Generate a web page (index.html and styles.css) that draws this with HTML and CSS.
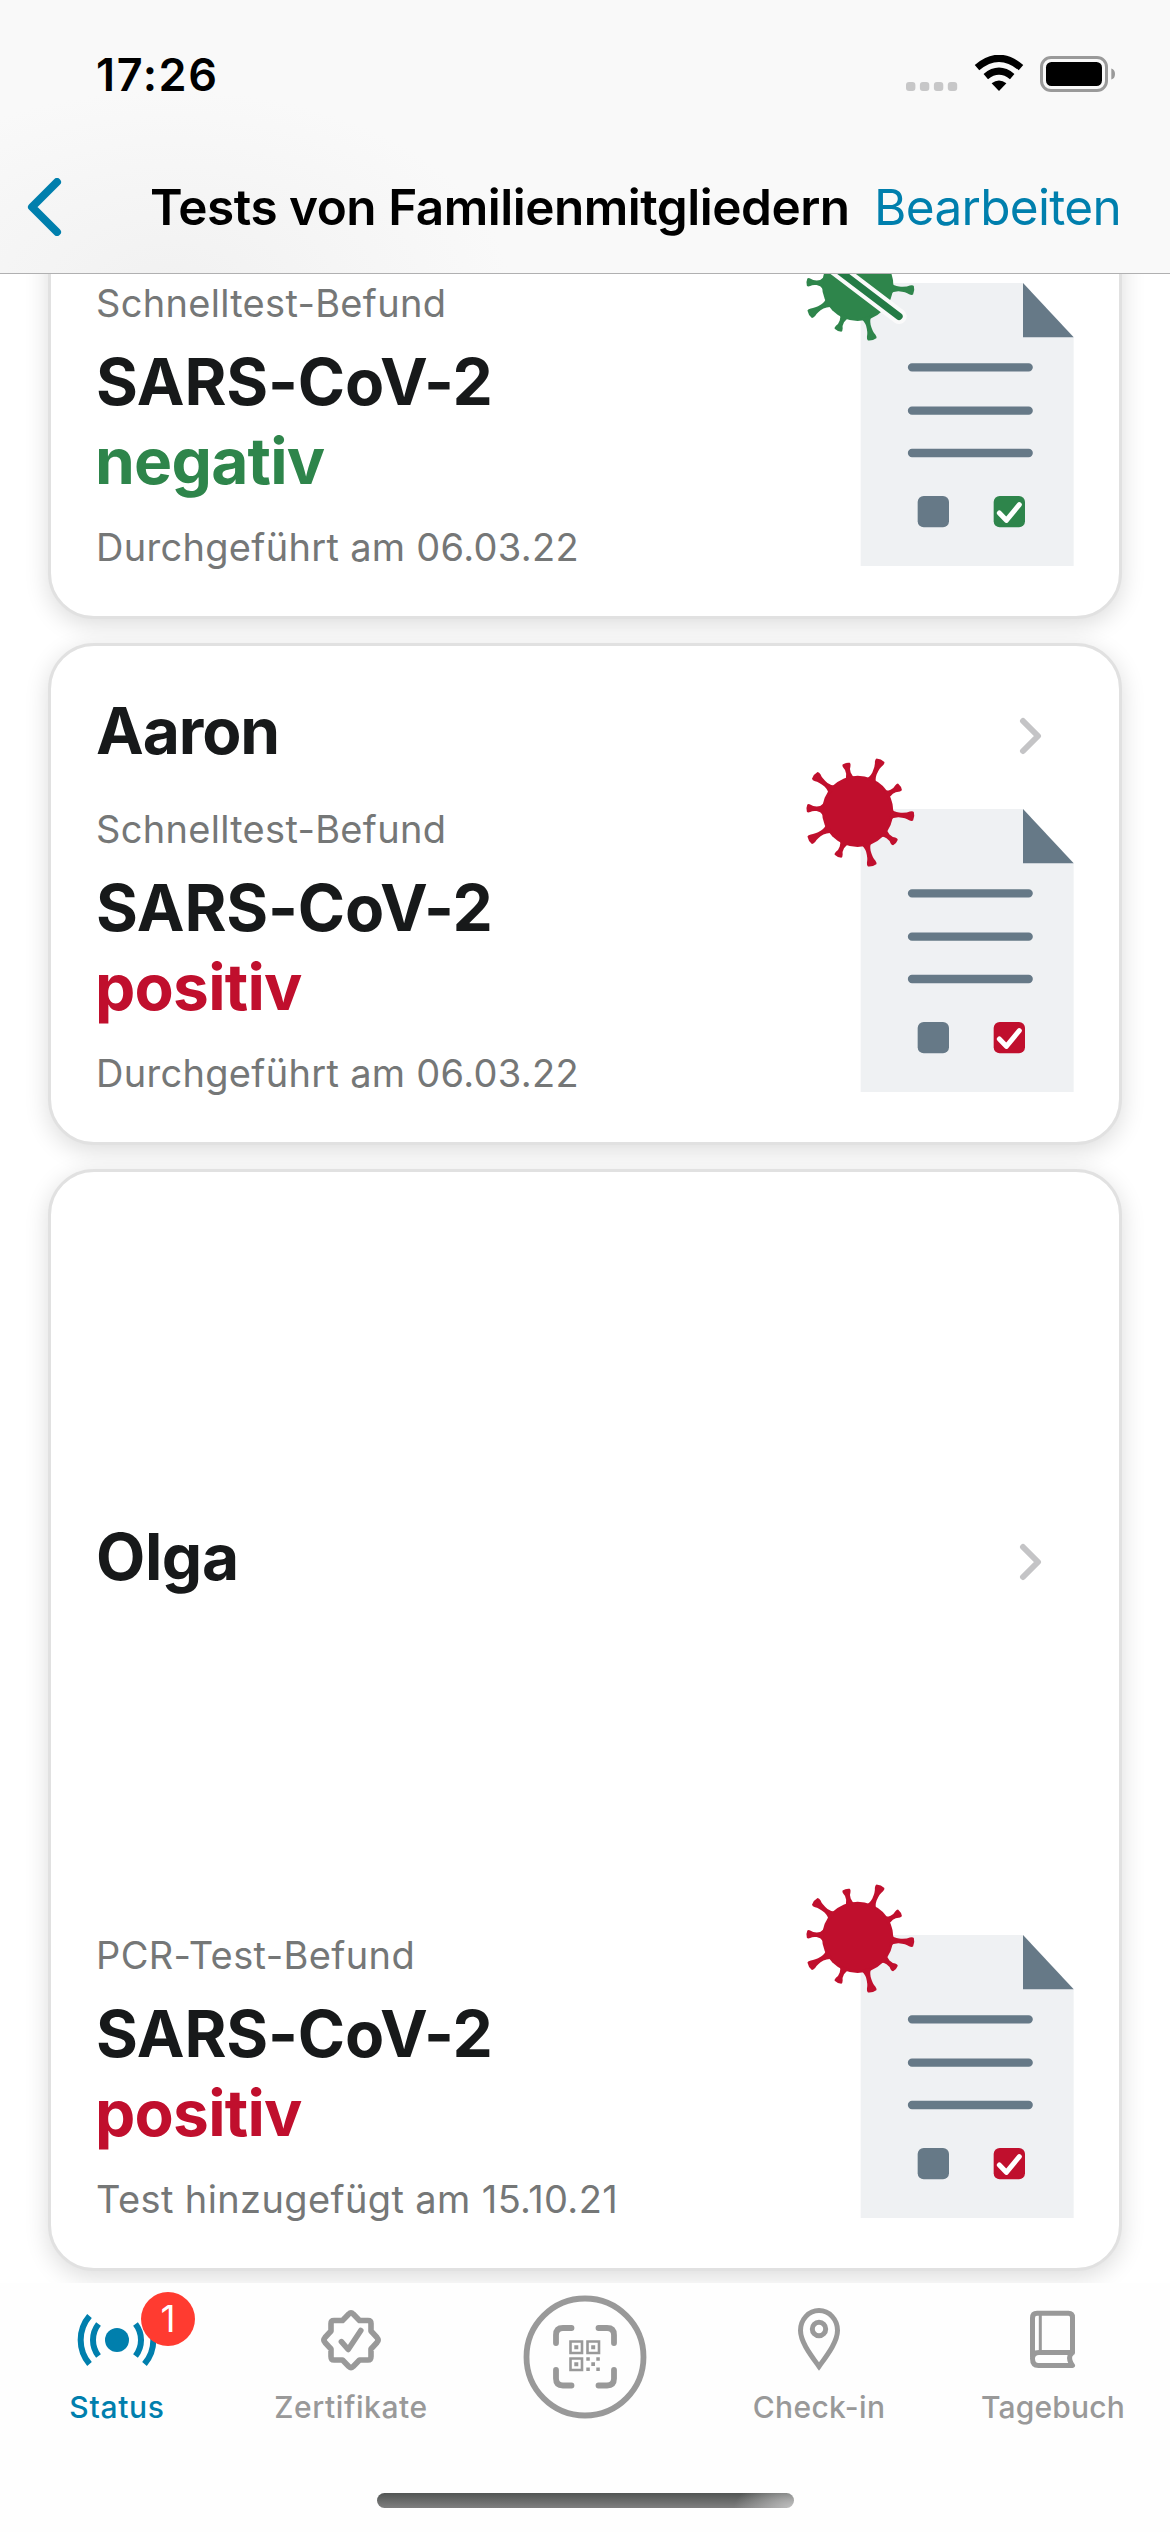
FILE: index.html
```html
<!DOCTYPE html>
<html lang="de">
<head>
<meta charset="utf-8">
<title>Tests von Familienmitgliedern</title>
<link rel="stylesheet" href="styles.css">
</head>
<body>
<svg class="defs" aria-hidden="true">
  <defs>
    <path id="spike-long" d="M98-18Q108-8 124-7Q146-7 156-13Q164-16 168-13Q173 0 168 13Q164 16 156 13Q146 7 124 7Q108 8 98 18Z"/>
    <path id="spike-short" d="M98-18Q106-8 118-7Q130-6 137-11Q144-14 147-11Q151 0 147 11Q144 14 137 11Q130 6 118 7Q106 8 98 18Z"/>
    <g id="virus" transform="translate(263 274)">
      <circle r="107"/>
      <use href="#spike-long" transform="rotate(-66)"/>
      <use href="#spike-short" transform="rotate(-30)"/>
      <use href="#spike-long" transform="rotate(5)"/>
      <use href="#spike-short" transform="rotate(39.5)"/>
      <use href="#spike-long" transform="rotate(75)"/>
      <use href="#spike-short" transform="rotate(113.7)"/>
      <use href="#spike-long" transform="rotate(149)"/>
      <use href="#spike-short" transform="translate(-5 0) rotate(183.7)"/>
      <use href="#spike-long" transform="rotate(220)"/>
      <use href="#spike-short" transform="rotate(256.4)"/>
    </g>
    <g id="paper">
      <path class="sheet" d="M272 267H759L911 429V1116H272Z"/>
      <path class="slate" d="M759 267V430H911Z"/>
      <path class="rule" d="M426 520H776M426 650H776M426 777H776"/>
      <rect class="slate" x="443" y="906" width="94" height="94" rx="18"/>
    </g>
    <g id="checked">
      <rect x="671" y="906" width="94" height="94" rx="18"/>
      <path class="tick" d="M688 957L709 979L748 932"/>
    </g>
    <path id="chevron" d="M4 4L19 19L4 34"/>
  </defs>
</svg>

<header class="header">
  <div class="status-bar">
    <span class="time">17:26</span>
    <div class="indicators">
      <svg class="cellular" width="52" height="9" viewBox="0 0 52 9"><rect width="9.4" height="9" rx="3"/><rect x="13.9" width="9.4" height="9" rx="3"/><rect x="27.9" width="9.4" height="9" rx="3"/><rect x="41.8" width="9.4" height="9" rx="3"/></svg>
      <svg class="wifi" width="50" height="37" viewBox="0 0 50 37"><path d="M25 36L17.6 28.3Q25 22.5 32.4 28.3Z"/><path class="wave" d="M11.8 21.6Q25 10.8 38.2 21.6M3 12.6Q25-6 47 12.6"/></svg>
      <svg class="battery" width="76" height="36" viewBox="0 0 76 36"><rect class="shell" x="1.5" y="1.5" width="65" height="33" rx="9.5"/><rect x="6" y="6" width="56" height="24" rx="5.5"/><path class="nub" d="M71.3 12.5Q75 13.5 75 18T71.3 23.5Z"/></svg>
    </div>
  </div>
  <nav class="nav-bar">
    <svg class="back" width="36" height="58" viewBox="0 0 36 58"><path d="M31 4L6 29L31 54"/></svg>
    <h1 class="title">Tests von Familienmitgliedern</h1>
    <span class="edit">Bearbeiten</span>
  </nav>
</header>

<main class="list">
  <section class="card">
    <div class="card-head"></div>
    <div class="card-body">
      <div class="result">
        <p class="kind">Schnelltest-Befund</p>
        <p class="finding">SARS-CoV-2</p>
        <p class="finding negative">negativ</p>
        <p class="date">Durchgeführt am 06.03.22</p>
      </div>
      <svg class="illustration green" viewBox="99 108 816 1011">
        <use href="#paper"/><use href="#virus"/><use href="#checked"/>
        <path class="slash-gap" d="M138 178L387 367"/><path class="slash" d="M138 178L387 367"/>
      </svg>
    </div>
  </section>
  <section class="card">
    <div class="card-head"><h2 class="name">Aaron</h2><svg class="chevron" width="24" height="38"><use href="#chevron"/></svg></div>
    <div class="card-body">
      <div class="result">
        <p class="kind">Schnelltest-Befund</p>
        <p class="finding">SARS-CoV-2</p>
        <p class="finding positive">positiv</p>
        <p class="date">Durchgeführt am 06.03.22</p>
      </div>
      <svg class="illustration red" viewBox="99 108 816 1011"><use href="#paper"/><use href="#virus"/><use href="#checked"/></svg>
    </div>
  </section>
  <section class="card tall">
    <div class="card-head"><h2 class="name">Olga</h2><svg class="chevron" width="24" height="38"><use href="#chevron"/></svg></div>
    <div class="card-body">
      <div class="result">
        <p class="kind">PCR-Test-Befund</p>
        <p class="finding">SARS-CoV-2</p>
        <p class="finding positive">positiv</p>
        <p class="date">Test hinzugefügt am 15.10.21</p>
      </div>
      <svg class="illustration red" viewBox="99 108 816 1011"><use href="#paper"/><use href="#virus"/><use href="#checked"/></svg>
    </div>
  </section>
</main>

<footer class="tab-bar">
  <div class="tab status active">
    <svg class="icon" viewBox="-35 -35 70 70"><circle class="solid" r="12"/><path class="butt" d="M-18.5-16A26 26 0 0 0-18.5 16M-27.5-24A37 37 0 0 0-27.5 24M18.5-16A26 26 0 0 1 18.5 16M27.5-24A37 37 0 0 1 27.5 24"/></svg>
    <span class="badge">1</span>
    <span class="label">Status</span>
  </div>
  <div class="tab certificates">
    <svg class="icon" viewBox="-35 -35 70 70"><path d="M-2.2-26Q0-28.5 2.2-26L8.5-19.500H17Q20-19.500 20-16.500V-9L26-2.500Q28.200 0 26 2.500L20 9V16.500Q20 20 17 20H8.500L2.200 26.500Q0 28.500-2.200 26.500L-8.500 20H-17Q-20 20-20 16.500V9L-26 2.500Q-28.200 0-26-2.500L-20-9V-16.500Q-20-19.500-17-19.500H-8.500Z"/><path d="M-9.600 1.700L-2.800 9.500L9.800-9.500"/></svg>
    <span class="label">Zertifikate</span>
  </div>
  <div class="tab">
    <svg class="scan" viewBox="-62 -62 124 124"><circle r="58.5"/><path class="frame" d="M-29-14V-22Q-29-29-22-29H-13.500M13.500-29H22Q29-29 29-22V-14M29 13V21.500Q29 28.500 22 28.500H13.500M-13.500 28.500H-22Q-29 28.500-29 21.500V13"/><path class="qr" d="M-14.500-15.500h11.500v11.500h-11.500ZM2.500-15.500h11.500v11.500h-11.500ZM-14.500 1.500h11.500v11.500h-11.500Z"/><path class="solid" d="M-10.700-11.700h4v4h-4ZM6.200-11.700h4v4h-4ZM-10.700 5.300h4v4h-4ZM1.300.3h3.500v3.500h-3.500ZM11.300.3h3.500v3.500h-3.500ZM6.300 5.300h3.700v3.700h-3.700ZM1.300 10.500h3.500v3.500h-3.500ZM11.300 10.500h3.500v3.500h-3.500Z"/></svg>
  </div>
  <div class="tab checkin">
    <svg class="icon" viewBox="-35 -35 70 70"><path class="pin" d="M0 26.500C-9 14-18.500 1.500-18.500-9.500A18.500 20 0 0 1 18.500-9.500C18.500 1.500 9 14 0 26.500Z"/><circle class="pin" cy="-11" r="6.7"/></svg>
    <span class="label">Check-in</span>
  </div>
  <div class="tab diary">
    <svg class="icon" viewBox="-35 -35 70 70"><path class="book" d="M-20.500 17V-22Q-20.500-26.700-16-26.700H15.500Q19.500-26.700 19.500-22.500V12.500L17 15.500Q15.500 20 19.500 25.500H-14.500Q-20.500 25.500-20.500 18.500Q-20.500 12.500-14 12.500H19.500"/><path class="spine" d="M-12.700-26V12"/></svg>
    <span class="label">Tagebuch</span>
  </div>
  <div class="home-indicator"></div>
</footer>
</body>
</html>
```
FILE: styles.css
```css
* { box-sizing: border-box; margin: 0; padding: 0; }
body {
  width: 1170px;
  height: 2532px;
  overflow: hidden;
  display: flex;
  flex-direction: column;
  background: #fff;
  color: #17191a;
  font-family: Inter, "Liberation Sans", sans-serif;
}
svg { display: block; flex: none; }
.defs { position: absolute; width: 0; height: 0; }

.header {
  flex: none;
  height: 274px;
  border-bottom: 1px solid #b0b0b1;
  background: radial-gradient(ellipse 340px 200px at 170px 290px, #f1f1f1, #f9f9f900), #f9f9f9;
  color: #000;
}
.status-bar { height: 147px; display: flex; justify-content: space-between; padding: 0 54px 0 96px; }
.time { font-size: 45px; font-weight: 600; line-height: 54px; padding-top: 48px; letter-spacing: 1.6px; }
.indicators { display: flex; align-items: flex-end; height: 92px; }
.cellular { fill: #c7c7c8; margin: 0 16px 1px 0; }
.wifi { margin-right: 16px; }
.wave { fill: none; stroke: #000; stroke-width: 7; }
.shell { fill: none; stroke: #9a9a9a; stroke-width: 3; }
.nub { fill: #9a9a9a; }

.nav-bar { height: 120px; display: flex; align-items: center; padding: 0 49px 0 26px; }
.back { fill: none; stroke: #007fad; stroke-width: 8; stroke-linecap: round; stroke-linejoin: round; }
.title { margin-left: 88px; font-size: 49.5px; font-weight: 600; white-space: nowrap; letter-spacing: -0.49px; }
.edit { margin-left: auto; font-size: 49.5px; color: #007fad; letter-spacing: -0.7px; }

.list {
  flex: none;
  height: 2009px;
  overflow: hidden;
  display: flex;
  flex-direction: column;
  justify-content: flex-end;
  gap: 24px;
  padding: 0 48px 12px;
}
.card {
  flex: none;
  height: 502px;
  display: flex;
  flex-direction: column;
  padding: 24px 44px 0 45px;
  border: 3px solid #e1e1e1;
  border-radius: 46px;
  background: #fff;
  box-shadow: 0 6px 24px rgba(0, 0, 0, 0.14);
}
.card.tall { height: 1102px; }
.card-head { flex: 1; display: flex; justify-content: space-between; align-items: center; padding-right: 32px; }
.name { font-size: 64px; font-weight: 700; line-height: 79px; padding-bottom: 11px; letter-spacing: -1.1px; }
.tall .name { letter-spacing: -0.4px; }
.chevron { fill: none; stroke: #c4c4c6; stroke-width: 6; stroke-linecap: round; stroke-linejoin: round; }
.card-body { height: 340px; display: flex; justify-content: space-between; }
.result { padding-top: 2px; }
.kind, .date { font-size: 38px; line-height: 50px; color: #757777; letter-spacing: 0.3px; }
.tall .kind, .tall .date { letter-spacing: 0.38px; }
.finding { font-size: 64px; font-weight: 700; line-height: 79px; letter-spacing: -0.17px; }
.kind { margin-bottom: 14px; }
.date { margin-top: 22px; }
.negative, .positive { letter-spacing: -0.75px; margin-left: -1px; }
.negative { color: #2e854b; }
.positive { color: #c00f2d; }

.illustration { width: 272px; height: 337px; margin-top: -46px; }
.green { fill: #2e854b; }
.red { fill: #c00f2d; }
.sheet { fill: #eff1f3; }
.slate { fill: #667987; }
.rule { fill: none; stroke: #667987; stroke-width: 25; stroke-linecap: round; }
.tick { fill: none; stroke: #fff; stroke-width: 15; stroke-linecap: round; stroke-linejoin: round; }
.slash-gap { stroke: #fafafa; stroke-width: 46; stroke-linecap: round; }
.slash { stroke: #237a45; stroke-width: 22; stroke-linecap: round; }

.tab-bar {
  position: relative;
  flex: 1;
  display: grid;
  grid-template-columns: repeat(5, 1fr);
  background: #fefefe;
  color: #999;
}
.tab { position: relative; display: flex; flex-direction: column; align-items: center; padding-top: 22px; }
.active { color: #007fad; }
.icon { width: 70px; height: 70px; overflow: visible; fill: none; stroke: currentColor; stroke-width: 5.6px; stroke-linecap: round; stroke-linejoin: round; }
.tab .solid { fill: currentColor; stroke: none; }
.tab .butt { stroke-width: 6px; stroke-linecap: butt; }
.tab .pin { stroke-width: 5px; stroke-linejoin: miter; }
.tab .book { stroke-width: 5px; }
.tab .spine { stroke-width: 3px; stroke-linecap: butt; }
.scan { width: 124px; height: 124px; margin-top: -10px; fill: none; stroke: currentColor; stroke-width: 5.8px; }
.frame { stroke-linecap: round; }
.tab .qr { stroke-width: 2.6px; }
.badge {
  position: absolute;
  left: 141px;
  top: 9px;
  width: 54px;
  height: 54px;
  border-radius: 50%;
  background: #ff3b30;
  color: #fff;
  font-size: 37px;
  line-height: 54px;
  text-align: center;
}
.label { font-size: 30px; font-weight: 500; line-height: 40px; margin-top: 12px; }
.status .label { letter-spacing: 0.7px; }
.certificates .label { letter-spacing: 0.57px; }
.checkin .label { letter-spacing: 0.37px; }
.diary .label { letter-spacing: 0.19px; }
.home-indicator {
  position: absolute;
  left: 377px;
  top: 210px;
  width: 417px;
  height: 15px;
  border-radius: 8px;
  background: radial-gradient(ellipse 60px 30px at 100% 100%, #c0c0c0, #c0c0c000), linear-gradient(#525554, #7f7f7f);
}
```
